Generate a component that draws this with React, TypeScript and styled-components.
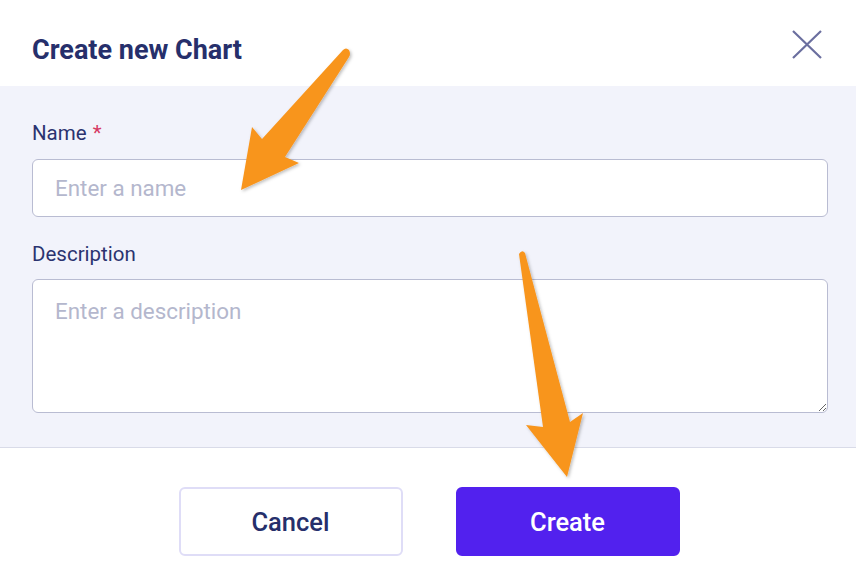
import React from 'react';
import styled, { createGlobalStyle } from 'styled-components';

const GlobalStyle = createGlobalStyle`
  html, body {
    margin: 0;
    padding: 0;
    background: #ffffff;
  }
  body {
    font-family: Roboto, "Liberation Sans", sans-serif;
  }
  * { box-sizing: border-box; }
`;

const Modal = styled.div`
  position: relative;
  width: 856px;
  height: 586px;
  display: flex;
  flex-direction: column;
  background: #ffffff;
  overflow: hidden;
`;

const Header = styled.div`
  height: 86px;
  display: flex;
  justify-content: space-between;
  align-items: flex-start;
  padding: 30px 34px 0 32px;
`;

const Title = styled.h2`
  margin: 4px 0 0;
  font-size: 27px;
  line-height: 1.2;
  font-weight: 700;
  color: #262f6b;
`;

const CloseButton = styled.button`
  width: 30px;
  height: 30px;
  padding: 0;
  border: none;
  background: none;
  cursor: pointer;
  display: flex;
  align-items: center;
  justify-content: center;
`;

const Body = styled.div`
  background: #f2f3fb;
  padding: 35px 28px 34px 32px;
  border-bottom: 1px solid #d9dbe8;
  display: flex;
  flex-direction: column;
`;

const Field = styled.div<{ $spaced?: boolean }>`
  display: flex;
  flex-direction: column;
  gap: 13px;
  margin-top: ${p => (p.$spaced ? '25px' : '0')};
`;

const Label = styled.label`
  font-size: 20.5px;
  line-height: 1.2;
  color: #2b3370;
`;

const Required = styled.span`
  color: #d63a63;
  margin-left: 6px;
`;

const inputBase = `
  width: 100%;
  border: 1px solid #b9bcd2;
  border-radius: 6px;
  background: #ffffff;
  font-family: Roboto, "Liberation Sans", sans-serif;
  font-size: 22.4px;
  color: #262f6b;
  outline: none;
  &::placeholder { color: #b4b7cd; }
`;

const TextInput = styled.input`
  ${inputBase}
  height: 58px;
  padding: 0 22px;
`;

const TextArea = styled.textarea`
  ${inputBase}
  height: 134px;
  padding: 18px 22px 15px;
  line-height: 1.2;
  resize: vertical;
`;

const Footer = styled.div`
  flex: 1;
  display: flex;
  justify-content: center;
  align-items: flex-start;
  gap: 53px;
  padding-top: 39px;
  padding-left: 2px;
`;

const Button = styled.button<{ $primary?: boolean }>`
  width: 224px;
  height: 69px;
  border-radius: 6px;
  font-family: Roboto, "Liberation Sans", sans-serif;
  font-size: 25.5px;
  font-weight: 500;
  cursor: pointer;
  border: 2px solid ${p => (p.$primary ? '#5221ee' : '#dfddf7')};
  background: ${p => (p.$primary ? '#5221ee' : '#ffffff')};
  color: ${p => (p.$primary ? '#ffffff' : '#262f6b')};
`;

const Overlay = styled.svg`
  position: absolute;
  left: 0;
  top: 0;
  pointer-events: none;
`;

const App = () => {
  return (
    <>
      <GlobalStyle />
      <Modal>
        <Header>
          <Title>Create new Chart</Title>
          <CloseButton type="button" aria-label="Close">
            <svg width="30" height="30" viewBox="0 0 30 30">
              <path d="M1 1 L29 28 M29 1 L1 28" stroke="#6b6f9f" strokeWidth="2.2" fill="none" />
            </svg>
          </CloseButton>
        </Header>
        <Body>
          <Field>
            <Label>
              Name<Required>*</Required>
            </Label>
            <TextInput placeholder="Enter a name" />
          </Field>
          <Field $spaced>
            <Label>Description</Label>
            <TextArea placeholder="Enter a description" />
          </Field>
        </Body>
        <Footer>
          <Button type="button">Cancel</Button>
          <Button type="button" $primary>Create</Button>
        </Footer>

        <Overlay width="856" height="586" viewBox="0 0 856 586">
          <defs>
            <filter id="shadow" x="-20%" y="-20%" width="140%" height="140%">
              <feDropShadow dx="1.5" dy="1.5" stdDeviation="1.5" floodColor="#000" floodOpacity="0.25" />
            </filter>
          </defs>
          <g fill="#f8951d" filter="url(#shadow)" strokeLinejoin="round">
            <path d="M343 50 Q346 47 349 50 Q351 54 349 57 L285 157 L299 163 L241 190 L252 127 L262 139 Z" />
            <path d="M519 254 Q522 249 525 253 L570 422 L583 413 L567 477 L526 425 L543 427 Z" />
          </g>
        </Overlay>
      </Modal>
    </>
  );
};

export default App;
